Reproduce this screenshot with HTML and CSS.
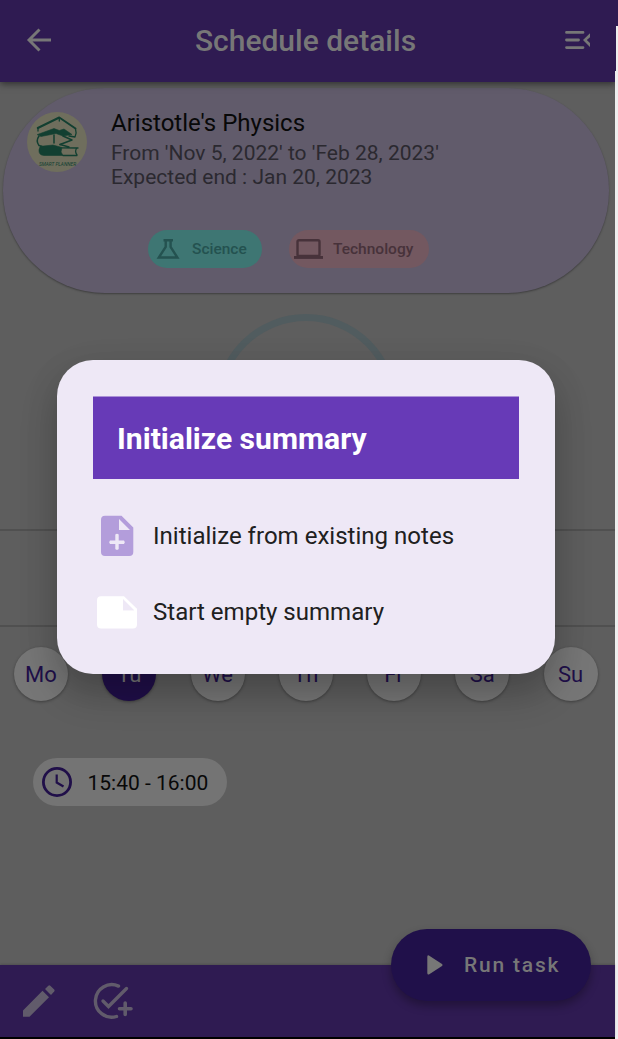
FILE: index.html
```html
<!DOCTYPE html>
<html lang="en">
<head>
<meta charset="utf-8">
<title>Schedule details</title>
<link rel="stylesheet" href="styles.css">
</head>
<body>
<div class="screen">
  <header class="appbar">
    <svg class="back" viewBox="0 0 32 32"><path d="M16.500 5.500L6 16L16.500 26.500M6.500 16H28" fill="none" stroke="currentColor" stroke-width="2.900"/></svg>
    <h1 class="title"><span>Schedule details</span></h1>
    <svg class="menu" viewBox="0 0 26 20"><g fill="none" stroke="currentColor" stroke-width="2.800" stroke-linecap="round"><path d="M2.500 2.400h16.500M2.500 10h12M2.500 17.600h16.500"/></g><path d="M26 3.200v4L22.800 10l3.200 3v4l-7-7z"/></svg>
  </header>
  <section class="card">
    <svg class="avatar" viewBox="0 0 60 60">
      <circle cx="30" cy="30" r="30" fill="#6f6e5d"/>
      <g fill="#123f31" stroke="#123f31" stroke-linejoin="round" stroke-linecap="round">
        <path fill="none" stroke-width="2" d="M10.800 16L32.300 5.500L48.500 16.500"/>
        <path fill="none" stroke-width="1.300" d="M48.500 17Q50 21 48 25L42 24M11 16V19M32.300 6V9"/>
        <path d="M10.500 22.500L27 16.500L32.300 18.500L37 17L45 22.500L36 24L29 21.500L14 24.500Z" stroke-width=".6"/>
        <path fill="none" stroke-width="1.500" d="M12 24Q8.500 29 12 33.500L15 34.500M27 23V31M36 24L45 28L33 32.500"/>
        <path d="M14 34.300L26 33L35 35.500L34 40L36 43.500H17Q11.500 43 12 38Q12.500 34.500 14 34.300Z" stroke-width=".6"/>
        <path fill="none" stroke-width="1.300" d="M35 35.800L51 36M36 43.500H50M49.500 36.500Q47.500 39.500 50 43M33 32.500L42 35"/>
      </g>
      <text class="logo-text" x="12" y="53.500" textLength="37" lengthAdjust="spacingAndGlyphs">SMART PLANNER</text>
    </svg>
    <div class="card-body">
      <h2 class="subject">Aristotle's Physics</h2>
      <p class="dates">From 'Nov 5, 2022' to 'Feb 28, 2023'</p>
      <p class="dates end">Expected end : Jan 20, 2023</p>
    </div>
    <div class="tags">
      <span class="tag science"><svg viewBox="0 0 24 24" width="24" height="24"><path d="M7.500 3.200h9.500M9.700 3.500V10L2.800 20.500H21.400L14.600 10V3.500" fill="none" stroke="currentColor" stroke-width="2.400"/></svg><span>Science</span></span>
      <span class="tag tech"><svg viewBox="0 0 29 24" width="29" height="24"><rect x="3.500" y="3.200" width="22" height="15.800" rx="1.500" fill="none" stroke="currentColor" stroke-width="2.400"/><path d="M0 19h29v2.900H0z"/></svg><span>Technology</span></span>
    </div>
  </section>
  <section class="progress"><div class="ring"></div></section>
  <section class="divider-band"></section>
  <section class="days">
    <span class="day">Mo</span><span class="day selected">Tu</span><span class="day">We</span><span class="day">Th</span><span class="day">Fr</span><span class="day">Sa</span><span class="day">Su</span>
  </section>
  <div class="time">
    <svg viewBox="0 0 30 30" width="30" height="30"><g fill="none" stroke="currentColor"><circle cx="15" cy="15" r="13.600" stroke-width="2.800"/><path d="M14.700 7.500V15.500L21.500 19.500" stroke-width="2.200"/></g></svg>
    <span>15:40 - 16:00</span>
  </div>
  <footer class="bottombar">
    <svg width="32" height="32" viewBox="0 0 32 32"><path d="M0 25.500V31.800H6.500L26 12.300L19.500 5.800ZM22 4L25.300.7Q26.300-.2 27.300.7L31.200 4.600Q32 5.500 31.200 6.500L28 9.900Z"/></svg>
    <svg class="addtask" width="40" height="38" viewBox="0 0 40 38"><g fill="none" stroke="currentColor" stroke-width="3.400" stroke-linecap="round"><path d="M25.500 4.100A16.300 16.300 0 1 0 23.500 34.500"/><path d="M10 19L15.500 24.500L33.500 6.500" stroke-linejoin="miter"/><path d="M32.200 21V32.500M26.500 26.700H38" stroke-width="3.600"/></g></svg>
  </footer>
</div>
<button class="fab"><svg width="16" height="20" viewBox="0 0 16 20"><path d="M.3 1.700Q.5-.3 2.300.7L15 9Q16 10 15 11L2.300 19.300Q.5 20.200.3 18.300Z"/></svg><span>Run task</span></button>
<div class="dialog" role="dialog">
  <h2 class="dialog-title"><span>Initialize summary</span></h2>
  <div class="option">
    <svg width="48" height="48" viewBox="0 0 48 48"><path fill="#b39ddb" fill-rule="evenodd" d="M11.500 3.700H28.500L40.300 15.500V40Q40.300 44 36.300 44H12Q8 44 8 40V7.700Q8 3.700 12 3.700ZM26 7V18H37ZM22.300 22.500V28.500H17Q15.300 30.200 17 31.900H22.300V37Q24 38.700 25.700 37V31.900H31Q32.700 30.200 31 28.500H25.700V22.500Q24 20.800 22.300 22.500Z"/></svg>
    <span class="notes">Initialize from existing notes</span>
  </div>
  <div class="option">
    <svg width="48" height="48" viewBox="0 0 48 48"><path fill="#fff" fill-rule="evenodd" d="M8 8.300H31L44 20.800V36.500Q44 40.500 40 40.500H8Q4 40.500 4 36.500V12.300Q4 8.300 8 8.300ZM30 11.300V22.300H41Z"/><path fill="#eee8f6" d="M30 11.300V22.300H41Z"/></svg>
    <span class="empty">Start empty summary</span>
  </div>
</div>
</body>
</html>
```
FILE: styles.css
```css
* { box-sizing: border-box; }
body { margin: 0; width: 618px; height: 1039px; overflow: hidden; position: relative; background: linear-gradient(#2f1b52 26px, #eee 26px); font-family: Roboto, sans-serif; }
h1, h2, p { margin: 0; font-weight: 400; }
svg { fill: currentColor; flex: none; display: block; }
.screen { width: 615px; height: 1039px; display: flex; flex-direction: column; background: #5e5e5e; border-bottom: 2px solid #000; }
.appbar { width: 616px; height: 82px; flex: none; display: flex; align-items: center; padding: 0 26px 2px 23px; background: linear-gradient(#2f1b52, #2f1b52) 0 0 / 615px 100% no-repeat, linear-gradient(#2f1b52 71px, #eee 71px); color: #777; box-shadow: 0 2px 7px rgba(0,0,0,.5); position: relative; clip-path: polygon(0 0, 616px 0, 616px 82px, 615px 82px, 615px 102px, 0 102px); }
.back { width: 32px; height: 32px; }
.title { flex: 1; text-align: center; font-size: 30px; line-height: 36px; font-weight: 500; padding: 2px 8px 0 0; }
.menu { width: 26px; height: 20px; }
.card { flex: none; width: 606px; height: 204.500px; margin: 6px 0 -.500px 3px; border-radius: 102px; background: #615b6b; box-shadow: 0 1px 2px rgba(0,0,0,.35); display: grid; grid-template-columns: 84px 1fr; grid-template-rows: 142px 38px; padding: 0 0 0 24px; }
.avatar { width: 60px; height: 60px; margin-top: 24px; }
.logo-text { font: italic 400 6px Roboto, sans-serif; fill: #123f31; }
.card-body { padding-top: 20px; }
.subject { font-size: 24px; line-height: 30px; color: #080808; }
.dates { font-size: 21px; line-height: 24px; color: #2b2930; margin-top: 3px; white-space: nowrap; }
.dates.end { margin-top: 0; }
.tags { grid-column: 1 / 3; display: flex; gap: 27px; padding-left: 121px; }
.tag { height: 38px; border-radius: 19px; display: flex; align-items: center; font-size: 15.500px; font-weight: 500; }
.science { width: 114px; padding-left: 8px; gap: 12px; background: #3e7673; color: #245250; }
.tech { width: 140px; padding-left: 5px; gap: 10px; background: #735860; color: #47323a; }
.progress { height: 239px; flex: none; display: flex; justify-content: center; padding-top: 22px; border-bottom: 2px solid #505050; }
.ring { width: 182px; height: 182px; border: 7px solid #515c5f; border-radius: 50%; margin-right: 3px; }
.divider-band { height: 96px; flex: none; border-bottom: 2px solid #505050; }
.days { display: flex; justify-content: space-between; flex: none; padding: 20px 17.500px 0 14px; }
.day { width: 54px; height: 54px; border-radius: 50%; background: #767676; color: #200f49; font-size: 22px; line-height: 56px; text-align: center; box-shadow: 0 1px 3px rgba(0,0,0,.35); }
.day.selected { background: #200f49; color: #767676; }
.time { width: 194px; height: 48px; flex: none; border-radius: 24px; margin: 57px 0 0 33px; padding: 1px 0 0 9px; display: flex; align-items: center; gap: 15.500px; background: #747474; color: #200f49; font-size: 21px; }
.time svg { margin-top: -1px; }
.time span { color: #080808; }
.bottombar { height: 72px; margin-top: auto; flex: none; background: #2f1b52; color: #615b6b; display: flex; align-items: center; gap: 38px; padding-left: 23px; box-shadow: 0 -1px 2px rgba(0,0,0,.15); }
.fab { position: absolute; left: 391px; top: 929px; width: 200px; height: 72px; border: 0; border-radius: 36px; background: #20104a; color: #777; display: flex; align-items: center; padding: 0 0 0 36px; gap: 21px; font: 500 21px Roboto, sans-serif; letter-spacing: 1.800px; white-space: nowrap; box-shadow: 0 5px 10px rgba(0,0,0,.3); }
.dialog { position: absolute; left: 57px; top: 360px; width: 498px; height: 314px; border-radius: 36px; background: #eee8f6; color: #202020; padding: 36px; box-shadow: 0 20px 36px rgba(0,0,0,.22), 0 8px 40px rgba(0,0,0,.06); }
.dialog-title { height: 82.500px; background: linear-gradient(#ab91d7 1px, #673ab7 1px); color: #fff; font-size: 30.100px; font-weight: 700; line-height: 85px; padding-left: 24px; margin-bottom: 33px; }
.option { height: 48px; display: flex; align-items: center; gap: 12px; margin-bottom: 28.500px; font-size: 24.050px; white-space: nowrap; }
```
